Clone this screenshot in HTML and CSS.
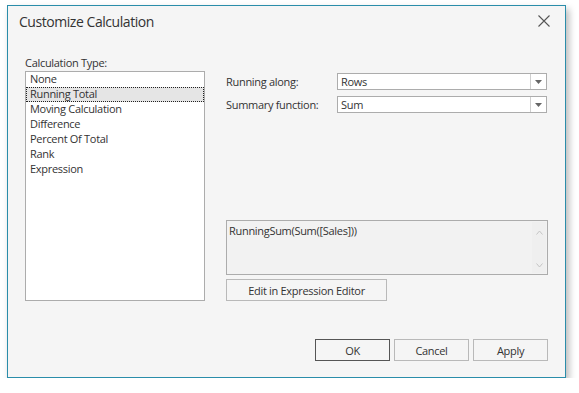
FILE: index.html
```html
<!DOCTYPE html>
<html>
<head>
<meta charset="utf-8">
<link rel="stylesheet" href="styles.css">
</head>
<body>
<div class="dialog">
  <div class="titlebar">
    <span class="title">Customize Calculation</span>
    <span class="close">
      <svg width="12" height="12" viewBox="0 0 12 12"><path d="M0.5 0.5 L11.5 11.5 M11.5 0.5 L0.5 11.5" stroke="#555" stroke-width="1.1" fill="none"/></svg>
    </span>
  </div>
  <div class="body">
    <div class="left">
      <div class="caption">Calculation Type:</div>
      <div class="listbox">
        <div class="item">None</div>
        <div class="item selected">Running Total</div>
        <div class="item">Moving Calculation</div>
        <div class="item">Difference</div>
        <div class="item">Percent Of Total</div>
        <div class="item">Rank</div>
        <div class="item">Expression</div>
      </div>
    </div>
    <div class="right">
      <div class="fields">
        <div class="field">
          <span class="label">Running along:</span>
          <div class="combo"><span class="value">Rows</span><span class="drop"><svg width="7" height="4" viewBox="0 0 7 4"><path d="M0 0 H7 L3.5 4 Z" fill="#666"/></svg></span></div>
        </div>
        <div class="field">
          <span class="label">Summary function:</span>
          <div class="combo"><span class="value">Sum</span><span class="drop"><svg width="7" height="4" viewBox="0 0 7 4"><path d="M0 0 H7 L3.5 4 Z" fill="#666"/></svg></span></div>
        </div>
      </div>
      <div class="expr">
        <div class="memo">
          <span class="memo-text">RunningSum(Sum([Sales]))</span>
          <span class="scroll">
            <svg width="7" height="5" viewBox="0 0 7 5"><path d="M0.5 4.5 L3.5 1 L6.5 4.5" stroke="#c4c4c4" fill="none"/></svg>
            <svg width="7" height="5" viewBox="0 0 7 5"><path d="M0.5 0.5 L3.5 4 L6.5 0.5" stroke="#c4c4c4" fill="none"/></svg>
          </span>
        </div>
        <button class="btn edit">Edit in Expression Editor</button>
      </div>
    </div>
  </div>
  <div class="footer">
    <button class="btn default">OK</button>
    <button class="btn">Cancel</button>
    <button class="btn">Apply</button>
  </div>
</div>
</body>
</html>
```
FILE: styles.css
```css
html, body {
  margin: 0;
  background: #ffffff;
}
body {
  padding: 5px 0 0 7px;
  font-family: "Open Sans", "Noto Sans", sans-serif;
  font-size: 11px;
  letter-spacing: -0.3px;
  color: #333;
}
.dialog {
  width: 557px;
  height: 371px;
  border: 1px solid #2a8daa;
  background: #f5f5f5;
  box-shadow: 3px 4px 7px rgba(0,0,0,0.28);
  display: flex;
  flex-direction: column;
  box-sizing: content-box;
}
.titlebar {
  height: 33px;
  display: flex;
  align-items: flex-start;
  justify-content: space-between;
  padding: 0 15px 0 11px;
}
.title {
  font-size: 14px;
  letter-spacing: -0.45px;
  line-height: 20px;
  margin-top: 6px;
  color: #333;
}
.close {
  margin-top: 9px;
  display: flex;
}
.body {
  flex: 1;
  display: flex;
  padding: 0 0 0 17px;
}
.left {
  width: 180px;
  display: flex;
  flex-direction: column;
}
.caption {
  height: 16px;
  line-height: 16px;
  margin-top: 16px;
}
.listbox {
  height: 228px;
  width: 178px;
  border: 1px solid #acacac;
  background: #fff;
}
.item {
  height: 15px;
  line-height: 14px;
  padding-left: 4px;
  white-space: nowrap;
}
.item.selected {
  background: #e5e5e5;
  outline: 1px dotted #222;
  outline-offset: -1px;
}
.right {
  margin-left: 21px;
  width: 322px;
  display: flex;
  flex-direction: column;
}
.fields {
  margin-top: 34px;
  display: flex;
  flex-direction: column;
  gap: 6px;
}
.field {
  display: flex;
  align-items: center;
  height: 17px;
}
.label {
  width: 111px;
  line-height: 15px;
}
.combo {
  width: 208px;
  height: 15px;
  border: 1px solid #acacac;
  background: #fff;
  display: flex;
}
.value {
  flex: 1;
  line-height: 15px;
  padding-left: 3px;
}
.drop {
  width: 15px;
  border-left: 1px solid #cfcfcf;
  display: flex;
  align-items: center;
  justify-content: center;
}
.expr {
  margin-top: 107px;
  display: flex;
  flex-direction: column;
  gap: 4px;
}
.memo {
  height: 53px;
  border: 1px solid #acacac;
  background: #f2f2f2;
  display: flex;
  justify-content: space-between;
}
.memo-text {
  padding: 2px 0 0 2px;
  line-height: 15px;
}
.scroll {
  width: 14px;
  background: #efefef;
  display: flex;
  flex-direction: column;
  justify-content: space-between;
  align-items: center;
  padding: 8px 0 5px;
  margin: 1px 1px 1px 0;
}
.btn {
  font-family: inherit;
  font-size: 11px;
  letter-spacing: -0.3px;
  color: #333;
  background: #f5f5f5;
  border: 1px solid #b9b9b9;
  height: 22px;
  padding: 0;
  margin: 0;
}
.edit {
  width: 161px;
}
.footer {
  height: 38px;
  display: flex;
  justify-content: flex-end;
  align-items: flex-start;
  gap: 4px;
  padding-right: 17px;
}
.footer .btn {
  width: 75px;
}
.btn.default {
  border-color: #555;
}
```
